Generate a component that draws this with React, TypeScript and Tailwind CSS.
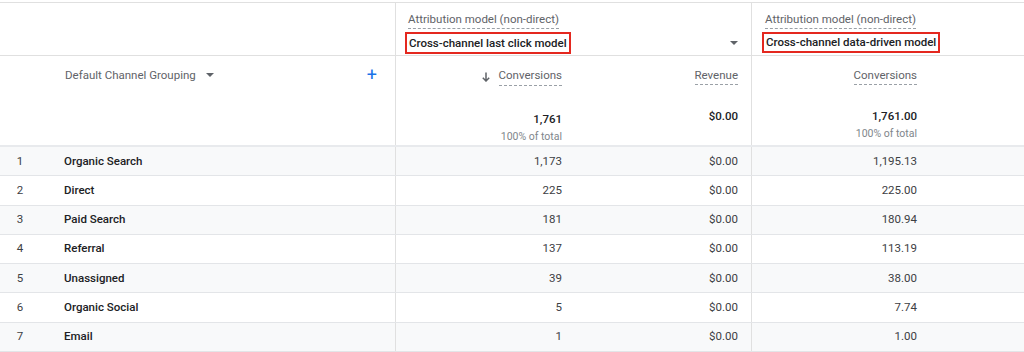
import React from "react";

const rows = [
    { name: "Organic Search", conv: "1,173", rev: "$0.00", dd: "1,195.13" },
    { name: "Direct", conv: "225", rev: "$0.00", dd: "225.00" },
    { name: "Paid Search", conv: "181", rev: "$0.00", dd: "180.94" },
    { name: "Referral", conv: "137", rev: "$0.00", dd: "113.19" },
    { name: "Unassigned", conv: "39", rev: "$0.00", dd: "38.00" },
    { name: "Organic Social", conv: "5", rev: "$0.00", dd: "7.74" },
    { name: "Email", conv: "1", rev: "$0.00", dd: "1.00" },
];

function Caret() {
    return (
        <svg width="8" height="4" viewBox="0 0 8 4" className="fill-[#5f6368]">
            <path d="M0 0 L8 0 L4 4 Z" />
        </svg>
    );
}

function Dashed({ children }: { children: React.ReactNode }) {
    return (
        <span className="border-b border-dashed border-[#9aa0a6] pb-[2px]">
            {children}
        </span>
    );
}

export default function App() {
    return (
        <div
            className="w-[1024px] h-[352px] overflow-hidden bg-white text-[11.5px] text-[#3c4043]"
            style={{ fontFamily: "Roboto, 'Liberation Sans', sans-serif" }}
        >
            {/* Header row 1: attribution models */}
            <div className="mt-[2px] flex h-[54px] border-t border-b border-[#e0e0e0]">
                <div className="w-[396px] shrink-0 border-r border-[#e0e0e0]" />
                <div className="w-[356px] shrink-0 border-r border-[#e0e0e0] pl-[9px] pr-[13px] pt-[8px]">
                    <div className="pl-[3px] leading-[16px] text-[#5f6368]">
                        <Dashed>Attribution model (non-direct)</Dashed>
                    </div>
                    <div className="mt-[5px] flex items-center justify-between">
                        <span className="border-2 border-[#e4281f] px-[2px] py-[1px] font-medium leading-[16px] text-[#202124]">
                            Cross-channel last click model
                        </span>
                        <span>
                            <Caret />
                        </span>
                    </div>
                </div>
                <div className="flex-1 pl-[10px] pt-[8px]">
                    <div className="pl-[3px] leading-[16px] text-[#5f6368]">
                        <Dashed>Attribution model (non-direct)</Dashed>
                    </div>
                    <div className="mt-[5px] flex">
                        <span className="border-2 border-[#e4281f] px-[2px] py-[1px] font-medium leading-[15px] text-[#202124]">
                            Cross-channel data-driven model
                        </span>
                    </div>
                </div>
            </div>

            {/* Header row 2: metrics and totals */}
            <div className="flex h-[91px] border-b-2 border-[#e8eaed]">
                <div className="w-[396px] shrink-0 border-r border-[#e0e0e0] pt-[11px]">
                    <div className="flex items-center leading-[16px]">
                        <span className="ml-[65px] text-[#5f6368]">Default Channel Grouping</span>
                        <span className="ml-[10px]">
                            <Caret />
                        </span>
                        <span className="ml-auto mr-[18px] text-[18px] leading-[16px] text-[#1a73e8]">+</span>
                    </div>
                </div>
                <div className="flex w-[356px] shrink-0 border-r border-[#e0e0e0] pt-[11px]">
                    <div className="w-[166px] shrink-0 text-right">
                        <div className="flex items-center justify-end gap-[9px] leading-[16px] text-[#5f6368]">
                            <svg width="8" height="10" viewBox="0 0 8 10" fill="none" stroke="#5f6368" strokeWidth="1.5">
                                <path d="M4 0.5 V9 M0.8 5.8 L4 9 L7.2 5.8" />
                            </svg>
                            <Dashed>Conversions</Dashed>
                        </div>
                        <div className="mt-[25px] font-medium leading-[16px] text-[#202124]">1,761</div>
                        <div className="mt-[3px] text-[10.5px] leading-[14px] text-[#80868b]">100% of total</div>
                    </div>
                    <div className="flex-1 pr-[13px] text-right">
                        <div className="leading-[16px] text-[#5f6368]">
                            <Dashed>Revenue</Dashed>
                        </div>
                        <div className="mt-[25px] font-medium leading-[16px] text-[#202124]">$0.00</div>
                    </div>
                </div>
                <div className="flex-1 pr-[107px] pt-[11px] text-right">
                    <div className="leading-[16px] text-[#5f6368]">
                        <Dashed>Conversions</Dashed>
                    </div>
                    <div className="mt-[25px] font-medium leading-[16px] text-[#202124]">1,761.00</div>
                    <div className="mt-[3px] text-[10.5px] leading-[14px] text-[#80868b]">100% of total</div>
                </div>
            </div>

            {/* Data rows */}
            {rows.map((r, i) => (
                <div
                    key={r.name}
                    className={`flex h-[29.3px] items-center border-b border-[#e3e5e8] ${
                        i % 2 === 0 ? "bg-[#f8f9fa]" : "bg-white"
                    }`}
                >
                    <div className="flex h-full w-[396px] shrink-0 items-center border-r border-[#e0e0e0]">
                        <span className="w-[40px] text-center">{i + 1}</span>
                        <span className="ml-[24px] font-medium text-[#202124]">{r.name}</span>
                    </div>
                    <div className="flex h-full w-[356px] shrink-0 items-center border-r border-[#e0e0e0]">
                        <span className="w-[166px] shrink-0 text-right">{r.conv}</span>
                        <span className="flex-1 pr-[13px] text-right">{r.rev}</span>
                    </div>
                    <div className="flex-1 pr-[107px] text-right">{r.dd}</div>
                </div>
            ))}
        </div>
    );
}
